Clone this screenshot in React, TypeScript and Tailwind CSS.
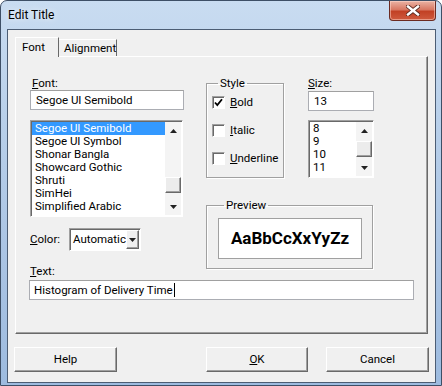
import type { ReactNode } from "react";

const raised =
  "border border-t-white border-l-white border-r-[#696969] border-b-[#696969] shadow-[inset_-1px_-1px_0_#a0a0a0]";
const sunken =
  "border border-t-[#a0a0a0] border-l-[#a0a0a0] border-r-white border-b-white shadow-[inset_1px_1px_0_#696969]";
const field = "border border-[#abadb3] border-t-[#a0a0a0] bg-white";

const fonts = [
  "Segoe UI Semibold",
  "Segoe UI Symbol",
  "Shonar Bangla",
  "Showcard Gothic",
  "Shruti",
  "SimHei",
  "Simplified Arabic",
];

function Arrow({ down }: { down?: boolean }) {
  return (
    <svg width="7" height="4" viewBox="0 0 7 4">
      <path d={down ? "M0 0h7L3.5 4z" : "M0 4h7L3.5 0z"} fill="#222" />
    </svg>
  );
}

function ScrollBar({ before }: { before: number }) {
  return (
    <div className="flex w-[16px] shrink-0 flex-col bg-[#f4f4f4]">
      <div className="flex h-[17px] items-center justify-center">
        <Arrow />
      </div>
      <div style={{ height: before }} />
      <div className={`h-[16px] bg-[#ececec] ${raised}`} />
      <div className="flex-1" />
      <div className="flex h-[17px] items-center justify-center">
        <Arrow down />
      </div>
    </div>
  );
}

function Check({ on, children }: { on?: boolean; children: ReactNode }) {
  return (
    <div className="flex h-[13px] items-center gap-[5px]">
      <div className={`flex h-[13px] w-[13px] items-center justify-center bg-white ${sunken}`}>
        {on && (
          <svg width="9" height="9" viewBox="0 0 9 9">
            <path d="M1 4.5l2.3 2.6L8 1.2" fill="none" stroke="#000" strokeWidth="1.8" />
          </svg>
        )}
      </div>
      <span>{children}</span>
    </div>
  );
}

export default function App() {
  return (
    <div className="relative flex h-[386px] w-[442px] flex-col overflow-hidden rounded-t-[7px] border border-[#3e4f66] bg-[linear-gradient(180deg,#c9dcf1_0%,#b9d0ea_30%,#a9c3e3_70%,#9dbbdf_100%)] font-['Roboto',sans-serif] text-[11.5px] leading-[13px] text-black">
      {/* title bar */}
      <div className="flex h-[28px] shrink-0 items-start">
        <span className="pl-[7px] pt-[7px] text-[12px] leading-[15px] text-black [text-shadow:0_0_6px_#fff]">
          Edit Title
        </span>
        <div className="ml-auto mr-[5px] flex h-[20px] w-[47px] items-center justify-center rounded-b-[4px] border border-t-0 border-[#6b2b22] bg-[linear-gradient(180deg,#eab3a4_0%,#d87863_45%,#c24125_55%,#cf5a3e_100%)] shadow-[inset_0_0_0_1px_rgba(255,220,210,0.5)]">
          <svg width="14" height="11" viewBox="0 0 14 11">
            <path d="M2 1.5l10 8M12 1.5l-10 8" stroke="#5a2a20" strokeWidth="4.2" strokeLinecap="square" />
            <path d="M2 1.5l10 8M12 1.5l-10 8" stroke="#fff" strokeWidth="2.4" strokeLinecap="square" />
          </svg>
        </div>
      </div>

      {/* client area */}
      <div className="mb-[2px] ml-[6px] mr-[5px] flex flex-1 flex-col border border-[#4c5d74] bg-[#f0f0f0]">
        {/* tabs */}
        <div className="ml-[7px] mt-[7px] flex h-[19px] items-end">
          <div className="relative z-10 flex h-[20px] w-[44px] self-start border-l border-t border-r border-l-white border-t-white border-r-[#696969] bg-[#f0f0f0] pl-[6px] pt-[3px]">
            Font
          </div>
          <div className="flex h-[17px] w-[58px] border-t border-r border-t-white border-r-[#696969] pl-[5px] pt-[2px]">
            Alignment
          </div>
        </div>

        {/* panel */}
        <div className="ml-[7px] flex h-[278px] w-[413px] flex-col border border-t-white border-l-white border-r-[#696969] border-b-[#696969] pl-[14px] pt-[19px] shadow-[inset_-1px_-1px_0_#a0a0a0]">
          <div className="flex items-start">
            {/* left column */}
            <div className="flex w-[154px] flex-col">
              <div className="h-[14px] pl-[2px] leading-[14px]">
                <u>F</u>ont:
              </div>
              <div className={`flex h-[20px] items-center pl-[5px] ${field}`}>Segoe UI Semibold</div>
              <div className={`mt-[10px] flex h-[97px] w-[153px] bg-white p-[1px] ${sunken} border-r-[#a0a0a0] border-b-[#a0a0a0]`}>
                <div className="flex-1 overflow-hidden">
                  {fonts.map((f, i) => (
                    <div
                      key={f}
                      className={`h-[13px] whitespace-nowrap pl-[3px] leading-[13px] ${
                        i === 0 ? "bg-[#3399ff] text-white" : ""
                      }`}
                    >
                      {f}
                    </div>
                  ))}
                </div>
                <ScrollBar before={38} />
              </div>
              <div className="mt-[11px] flex h-[23px] items-center">
                <span className="w-[39px]">
                  <u>C</u>olor:
                </span>
                <div className={`flex h-[23px] w-[72px] bg-white p-[1px] ${sunken}`}>
                  <span className="flex-1 pl-[2px] leading-[19px]">Automatic</span>
                  <div className={`flex w-[16px] items-center justify-center bg-[#f0f0f0] ${raised}`}>
                    <Arrow down />
                  </div>
                </div>
              </div>
              <div className="mt-[13px] h-[14px] leading-[14px]">
                <u>T</u>ext:
              </div>
            </div>

            {/* right area */}
            <div className="ml-[22px] flex flex-col">
              <div className="flex items-start">
                <fieldset className="h-[102px] w-[78px] border border-[#a0a0a0] pl-[5px] pt-[6px] shadow-[inset_1px_1px_0_#fff,1px_1px_0_#fff]">
                  <legend className="ml-[6px] px-[2px] leading-[14px]">Style</legend>
                  <div className="flex flex-col gap-[15px]">
                    <Check on>
                      <u>B</u>old
                    </Check>
                    <Check>
                      <u>I</u>talic
                    </Check>
                    <Check>
                      <u>U</u>nderline
                    </Check>
                  </div>
                </fieldset>
                <div className="ml-[24px] flex w-[66px] flex-col">
                  <div className="h-[14px] leading-[14px]">
                    <u>S</u>ize:
                  </div>
                  <div className={`mt-[1px] flex h-[20px] items-center pl-[5px] ${field}`}>13</div>
                  <div className={`mt-[9px] flex h-[58px] bg-white p-[1px] ${sunken} border-r-[#a0a0a0] border-b-[#a0a0a0]`}>
                    <div className="flex-1 overflow-hidden pl-[3px]">
                      {["8", "9", "10", "11"].map((s) => (
                        <div key={s} className="h-[13px] leading-[13px]">
                          {s}
                        </div>
                      ))}
                    </div>
                    <ScrollBar before={2} />
                  </div>
                </div>
              </div>
              <fieldset className="mt-[20px] h-[71px] w-[167px] border border-[#a0a0a0] pl-[11px] pt-[6px] shadow-[inset_1px_1px_0_#fff,1px_1px_0_#fff]">
                <legend className="ml-[6px] px-[2px] leading-[14px]">Preview</legend>
                <div className="flex h-[41px] w-[144px] items-center justify-center border border-[#a0a0a0] bg-white text-[17px] font-bold">
                  AaBbCcXxYyZz
                </div>
              </fieldset>
            </div>
          </div>

          <div className={`-ml-[1px] mt-[2px] flex h-[20px] w-[385px] items-center pl-[4px] ${field}`}>
            Histogram of Delivery Time
            <span className="ml-[1px] h-[14px] w-px bg-black" />
          </div>
        </div>

        {/* buttons */}
        <div className="ml-[6px] mt-[13px] flex">
          <button className={`h-[25px] w-[103px] bg-[#f0f0f0] ${raised}`}>Help</button>
          <button className={`ml-[89px] h-[25px] w-[102px] bg-[#f0f0f0] ${raised}`}>
            <u>O</u>K
          </button>
          <button className={`ml-[18px] h-[25px] w-[103px] bg-[#f0f0f0] ${raised}`}>Cancel</button>
        </div>
      </div>
    </div>
  );
}
